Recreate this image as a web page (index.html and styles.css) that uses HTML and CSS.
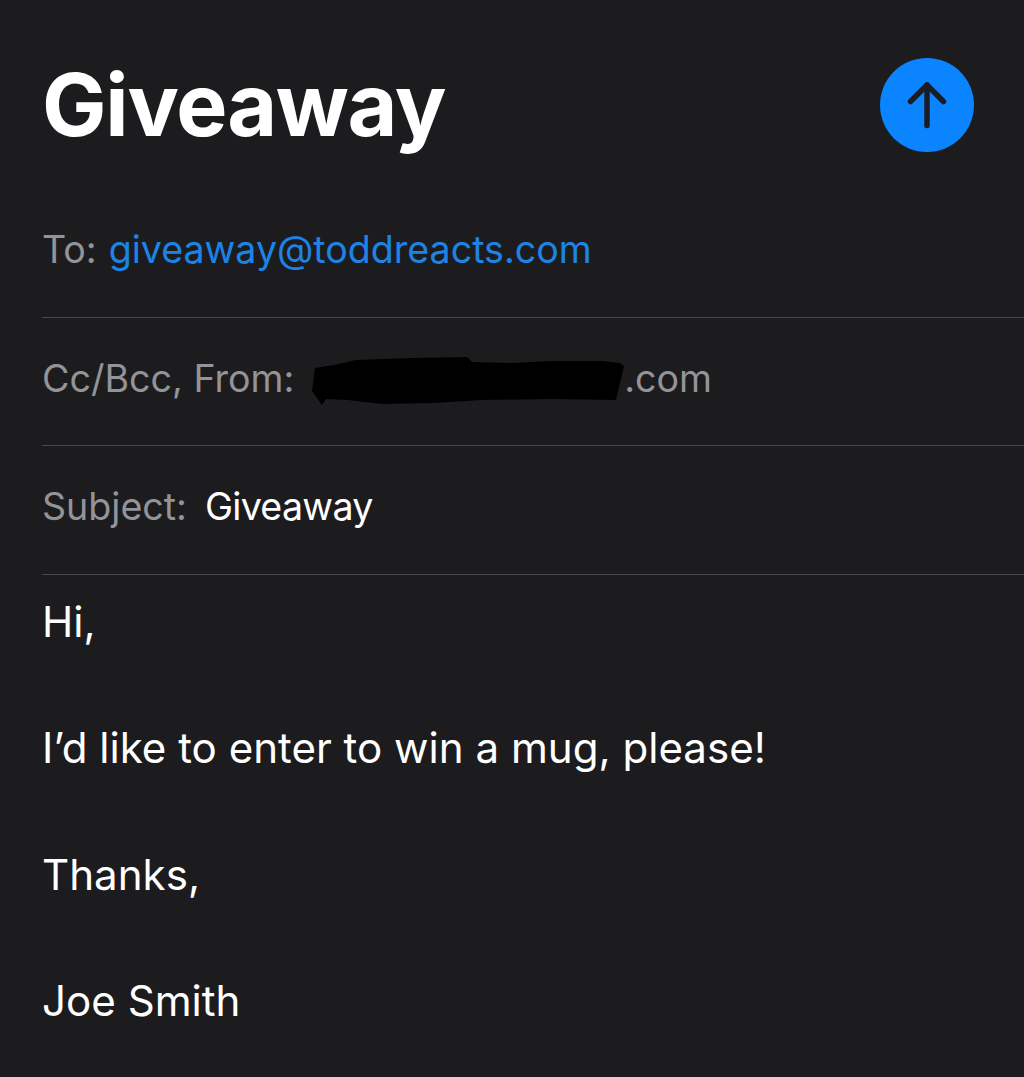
FILE: index.html
```html
<!DOCTYPE html>
<html lang="en">

<head>
  <meta charset="UTF-8">
  <meta name="viewport" content="width=device-width, initial-scale=1.0">
  <title>Giveaway</title>
  <link rel="stylesheet" href="styles.css">
</head>

<body>
  <div class="compose">
    <div class="compose-header">
      <h1>Giveaway</h1>
      <button class="send-btn" type="button" aria-label="Send">
        <svg width="40" height="48" viewBox="0 0 40 48" fill="none" stroke="#1c1c24" stroke-width="5.5" stroke-linecap="round" stroke-linejoin="round">
          <path d="M20 44.5V4" />
          <path d="M3.5 20.5L20 4L36.5 20.5" />
        </svg>
      </button>
    </div>

    <div class="field">
      <span class="label">To:</span>
      <span class="recipient">giveaway@toddreacts.com</span>
    </div>
    <div class="field">
      <span class="label">Cc/Bcc, From:</span>
      <svg class="redaction" width="312" height="52" viewBox="0 0 312 52">
        <path d="M3 14L22 11L44 6L100 4L155 3L160 8L200 9L240 7L290 7L308 9L312 12L304 46L240 45L170 46L120 49L70 50L36 46L14 45L10 51L5 44L0 37Z" fill="#000" />
      </svg>
      <span class="label">.com</span>
    </div>
    <div class="field">
      <span class="label">Subject:</span>
      <span class="subject">Giveaway</span>
    </div>

    <div class="message">
      <p>Hi,</p>
      <p>I’d like to enter to win a mug, please!</p>
      <p>Thanks,</p>
      <p>Joe Smith</p>
    </div>
  </div>
</body>

</html>
```

FILE: styles.css
```css
* {
  margin: 0;
  padding: 0;
  box-sizing: border-box;
}

body {
  font-family: Inter, "Liberation Sans", sans-serif;
  background: #1c1c1e;
  color: #fff;
  height: 1077px;
  overflow: hidden;
}

.compose {
  padding-left: 42px;
}

.compose-header {
  display: flex;
  align-items: center;
  justify-content: space-between;
  height: 189px;
  padding: 21px 50px 0 0;
}

.compose-header h1 {
  font-size: 86px;
  font-weight: 700;
  letter-spacing: -1.2px;
}

.send-btn {
  display: flex;
  align-items: center;
  justify-content: center;
  width: 94px;
  height: 94px;
  border: none;
  border-radius: 50%;
  background: #0a84ff;
}

.field {
  display: flex;
  align-items: center;
  gap: 13px;
  height: 128.5px;
  padding-bottom: 6px;
  border-bottom: 1px solid #48484a;
  font-size: 37.6px;
}

.label {
  color: #939398;
}

.recipient {
  margin-left: -1px;
  color: #1c84e8;
}

.subject {
  margin-left: 5px;
  letter-spacing: -0.7px;
}

.redaction {
  margin: 4px -13px 0 5px;
}

.message {
  font-size: 42.1px;
  padding-top: 22px;
}

.message p {
  height: 126.5px;
  line-height: 50px;
}
```
